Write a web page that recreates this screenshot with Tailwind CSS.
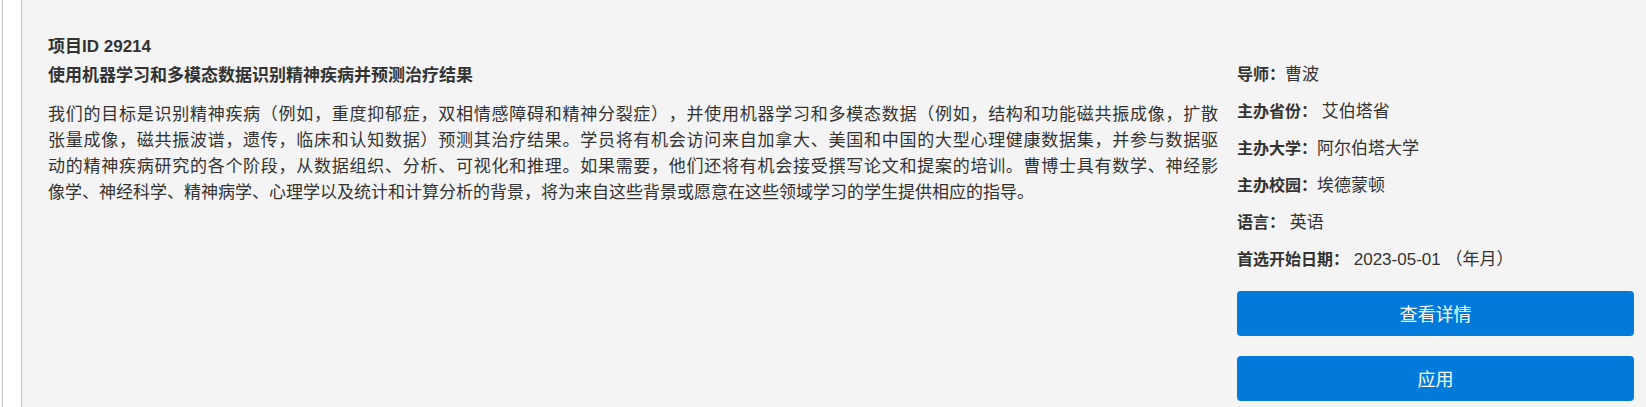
<!DOCTYPE html>
<html lang="zh-CN">
<head>
<meta charset="utf-8">
<meta name="viewport" content="width=device-width, initial-scale=1">
<title>项目ID 29214</title>
<script src="https://cdn.jsdelivr.net/npm/@tailwindcss/browser@4"></script>
</head>
<body class="bg-white">
<div class="ml-0.5 min-h-screen border-l border-[#c3c3c3] pl-[18px] flex">
  <main class="flex-1 flex border-l border-[#c3c3c3] bg-[#f4f4f4] pl-[26px] pr-3 pb-1 gap-[19px] text-[#333] text-[17px] font-normal font-['Liberation_Sans','Noto_Sans_CJK_SC',sans-serif] [text-spacing-trim:space-all]">
    <section class="flex-1 pt-8">
      <h2 class="font-bold leading-[29px]">项目ID 29214</h2>
      <h3 class="font-bold leading-[29px]">使用机器学习和多模态数据识别精神疾病并预测治疗结果</h3>
      <p class="mt-3 leading-[26px]">
        <span class="block [text-align-last:justify]">我们的目标是识别精神疾病（例如，重度抑郁症，双相情感障碍和精神分裂症），并使用机器学习和多模态数据（例如，结构和功能磁共振成像，扩散</span>
        <span class="block [text-align-last:justify]">张量成像，磁共振波谱，遗传，临床和认知数据）预测其治疗结果。学员将有机会访问来自加拿大、美国和中国的大型心理健康数据集，并参与数据驱</span>
        <span class="block [text-align-last:justify]">动的精神疾病研究的各个阶段，从数据组织、分析、可视化和推理。如果需要，他们还将有机会接受撰写论文和提案的培训。曹博士具有数学、神经影</span>
        <span class="block">像学、神经科学、精神病学、心理学以及统计和计算分析的背景，将为来自这些背景或愿意在这些领域学习的学生提供相应的指导。</span>
      </p>
    </section>
    <aside class="w-[397px] shrink-0 pt-14">
      <div class="leading-[37px]">
        <p><strong class="text-base/[37px] font-bold">导师：</strong>曹波</p>
        <p><strong class="text-base/[37px] font-bold">主办省份：</strong> 艾伯塔省</p>
        <p><strong class="text-base/[37px] font-bold">主办大学：</strong>阿尔伯塔大学</p>
        <p><strong class="text-base/[37px] font-bold">主办校园：</strong>埃德蒙顿</p>
        <p><strong class="text-base/[37px] font-bold">语言：</strong> 英语</p>
        <p><strong class="text-base/[37px] font-bold">首选开始日期：</strong> 2023-05-01 （年月）</p>
      </div>
      <div class="mt-[13px] flex flex-col gap-5 text-white">
        <button type="button" class="h-[45px] rounded bg-[#007bdb] pt-0.5 text-lg cursor-pointer">查看详情</button>
        <button type="button" class="h-[45px] rounded bg-[#007bdb] pt-0.5 text-lg cursor-pointer">应用</button>
      </div>
    </aside>
  </main>
</div>
</body>
</html>
